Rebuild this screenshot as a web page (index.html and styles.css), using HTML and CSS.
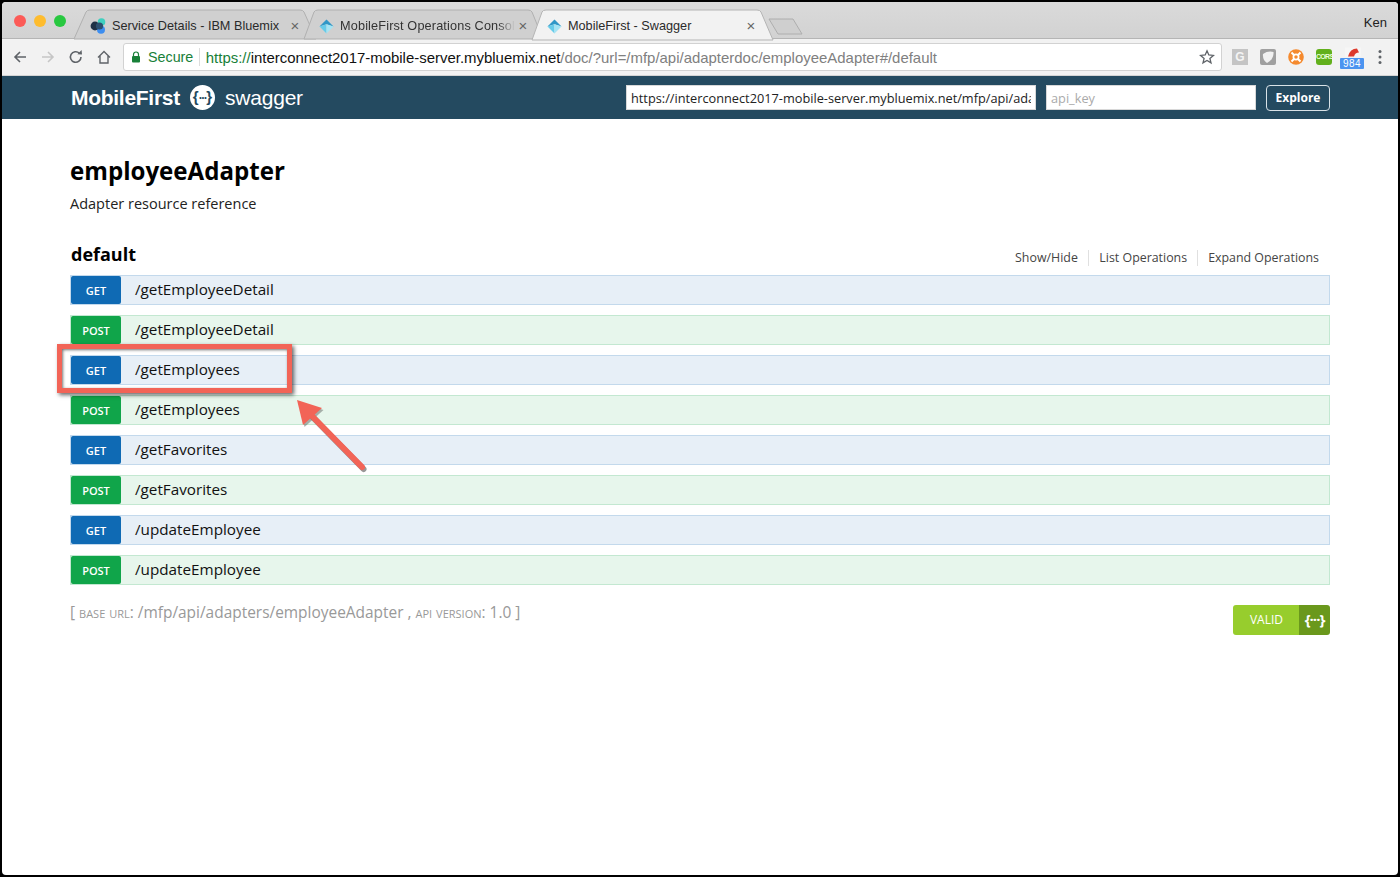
FILE: index.html
```html
<!DOCTYPE html>
<html lang="en">
<head>
<meta charset="utf-8">
<title>MobileFirst - Swagger</title>
<link rel="stylesheet" href="styles.css">
</head>
<body>
<div class="window">
  <div class="tabstrip">
    <div class="lights"><i class="light red"></i><i class="light yellow"></i><i class="light green"></i></div>
    <svg class="tabshapes" width="820" height="41" viewBox="0 0 820 41" aria-hidden="true">
      <path d="M74 39 L86 12 Q87 10 90 10 L300 10 Q303 10 304 12 L316 39 Z" fill="#d0d0d0" stroke="#b0b0b0"/>
      <path d="M304 39 L314 12 Q315 10 318 10 L528 10 Q531 10 532 12 L543 39 Z" fill="#d0d0d0" stroke="#b0b0b0"/>
      <path d="M532 40 L542 12 Q543 10 546 10 L757 10 Q760 10 761 12 L773 40 Z" fill="#f2f2f2" stroke="#b4b4b4"/>
      <path d="M769 19 L793 19 L802 34 L778 34 Z" fill="#cfcfcf" stroke="#aeaeae" stroke-linejoin="round"/>
    </svg>
    <div class="tab tab-one">
      <svg class="favicon" viewBox="0 0 16 16"><circle cx="11.5" cy="4" r="3.8" fill="#3fd0bf"/><circle cx="11" cy="11.8" r="4" fill="#3d8ef0"/><circle cx="5" cy="8" r="4.4" fill="#1f3246"/><circle cx="9.5" cy="8" r="3.6" fill="#2c4f6e"/></svg>
      <span class="tabtitle">Service Details - IBM Bluemix</span><span class="tabx">×</span>
    </div>
    <div class="tab tab-two">
      <svg class="favicon" viewBox="0 0 16 16"><path d="M8 .5 L15.5 8 L8 5.5 L.5 8 Z" fill="#2f97c7"/><path d="M.5 8 L8 5.5 L8 15.5 Z" fill="#66cbe9"/><path d="M15.5 8 L8 5.5 L8 15.5 Z" fill="#a4e4f4"/></svg>
      <span class="tabtitle fade">MobileFirst Operations Consol</span><span class="tabx">×</span>
    </div>
    <div class="tab tab-three">
      <svg class="favicon" viewBox="0 0 16 16"><path d="M8 .5 L15.5 8 L8 5.5 L.5 8 Z" fill="#2f97c7"/><path d="M.5 8 L8 5.5 L8 15.5 Z" fill="#66cbe9"/><path d="M15.5 8 L8 5.5 L8 15.5 Z" fill="#a4e4f4"/></svg>
      <span class="tabtitle wide">MobileFirst - Swagger</span><span class="tabx">×</span>
    </div>
    <span class="profile">Ken</span>
  </div>

  <div class="toolbar">
    <svg class="navicon" viewBox="0 0 16 16"><path d="M14 8 H3 M8 3 L3 8 L8 13" fill="none" stroke="#5f6368" stroke-width="1.6"/></svg>
    <svg class="navicon" viewBox="0 0 16 16"><path d="M2 8 H13 M8 3 L13 8 L8 13" fill="none" stroke="#c6c6c6" stroke-width="1.6"/></svg>
    <svg class="navicon" viewBox="0 0 16 16"><path d="M13 8 A5.3 5.3 0 1 1 11.4 4.2" fill="none" stroke="#5f6368" stroke-width="1.6"/><path d="M9.4 5.2 L14 5.6 L13.6 1 Z" fill="#5f6368"/></svg>
    <svg class="navicon" viewBox="0 0 16 16"><path d="M2 8.5 L8 2.5 L14 8.5 M4 7 V14 H12 V7" fill="none" stroke="#5f6368" stroke-width="1.4"/></svg>
    <div class="omnibox">
      <svg class="lock" viewBox="0 0 10 12"><path d="M2.5 5 V3.5 A2.5 2.5 0 0 1 7.5 3.5 V5" fill="none" stroke="#188038" stroke-width="1.2"/><rect x="1" y="5" width="8" height="6.5" rx="1" fill="#188038"/></svg>
      <span class="secure">Secure</span>
      <span class="omnisep"></span>
      <span class="url"><span class="scheme">https://</span><span class="host">interconnect2017-mobile-server.mybluemix.net</span><span class="path">/doc/?url=/mfp/api/adapterdoc/employeeAdapter#/default</span></span>
      <svg class="star" viewBox="0 0 16 16"><path d="M8 1.8 L9.8 6 L14.4 6.4 L10.9 9.4 L12 13.9 L8 11.5 L4 13.9 L5.1 9.4 L1.6 6.4 L6.2 6 Z" fill="none" stroke="#5f6368" stroke-width="1.3"/></svg>
    </div>
    <div class="extensions">
      <span class="ext ext-g">G</span>
      <svg class="ext" viewBox="0 0 16 16"><rect width="16" height="16" rx="2" fill="#a0a0a0"/><path d="M3 5 Q8 1.5 13.5 3 Q14 10 7 14 Q2.5 11 3 5 Z" fill="#f1f1f1"/></svg>
      <svg class="ext" viewBox="0 0 16 16"><circle cx="8" cy="8" r="7.8" fill="#f58a2e"/><circle cx="8" cy="8" r="2.6" fill="none" stroke="#fff" stroke-width="1.7"/><path d="M3.5 3.5 L6 6 M12.5 3.5 L10 6 M3.5 12.5 L6 10 M12.5 12.5 L10 10" stroke="#fff" stroke-width="2"/></svg>
      <span class="ext ext-cors">CORS</span>
      <span class="ext-badge">
        <svg class="gauge" viewBox="0 0 16 9"><rect width="16" height="9" fill="#f6f6f6"/><path d="M3 9 Q5 1 12 1 L14 5 Q10 5 9 9 Z" fill="#dd3a2c"/></svg>
        <span class="badge-num">984</span>
      </span>
    </div>
    <svg class="menu-dots" viewBox="0 0 4 16"><circle cx="2" cy="2.5" r="1.5"/><circle cx="2" cy="8" r="1.5"/><circle cx="2" cy="13.5" r="1.5"/></svg>
  </div>

  <header class="swagger-header">
    <div class="brand">
      <span class="brand-name">MobileFirst</span>
      <span class="brand-logo">{<b>···</b>}</span>
      <span class="brand-swagger">swagger</span>
    </div>
    <form class="explore-form">
      <input class="field field-url" type="text" value="https://interconnect2017-mobile-server.mybluemix.net/mfp/api/adapterdoc/employeeAdapter">
      <input class="field field-key" type="text" placeholder="api_key">
      <span class="explore">Explore</span>
    </form>
  </header>

  <main class="content">
    <h1 class="title">employeeAdapter</h1>
    <p class="subtitle">Adapter resource reference</p>
    <div class="section-head">
      <h2 class="section-name">default</h2>
      <ul class="section-links">
        <li>Show/Hide</li><li>List Operations</li><li>Expand Operations</li>
      </ul>
    </div>
    <div class="ops">
      <div class="op get"><span class="verb">GET</span><span class="oppath">/getEmployeeDetail</span></div>
      <div class="op post"><span class="verb">POST</span><span class="oppath">/getEmployeeDetail</span></div>
      <div class="op get"><span class="verb">GET</span><span class="oppath">/getEmployees</span></div>
      <div class="op post"><span class="verb">POST</span><span class="oppath">/getEmployees</span></div>
      <div class="op get"><span class="verb">GET</span><span class="oppath">/getFavorites</span></div>
      <div class="op post"><span class="verb">POST</span><span class="oppath">/getFavorites</span></div>
      <div class="op get"><span class="verb">GET</span><span class="oppath">/updateEmployee</span></div>
      <div class="op post"><span class="verb">POST</span><span class="oppath">/updateEmployee</span></div>
      <div class="highlight"></div>
      <svg class="arrow" width="80" height="82" viewBox="0 0 80 82" aria-hidden="true">
        <path d="M68 72 L18 21" stroke="#444" stroke-opacity=".55" stroke-width="6" stroke-linecap="round" transform="translate(1.5 2)"/>
        <path d="M3 5 L28 13 L9 30 Z" fill="#444" fill-opacity=".4" transform="translate(1.5 2)"/>
        <path d="M68 72 L18 21" stroke="#f26457" stroke-width="6" stroke-linecap="round"/>
        <path d="M3 5 L28 13 L9 30 Z" fill="#f26457"/>
      </svg>
    </div>
    <div class="foot">
      <div class="baseinfo">[ <span class="sc">base url</span>: /mfp/api/adapters/employeeAdapter , <span class="sc">api version</span>: 1.0 ]</div>
      <div class="valid"><span class="valid-text">VALID</span><span class="valid-icon">{···}</span></div>
    </div>
  </main>
</div>
</body>
</html>
```
FILE: styles.css
```css
* { box-sizing: border-box; }
html, body { margin: 0; padding: 0; background: #000; }
.window {
  position: relative;
  width: 1400px;
  height: 877px;
  border: 2px solid #000;
  border-radius: 6px;
  background: #fff;
  overflow: hidden;
  font-family: "Open Sans", sans-serif;
}
.tabstrip {
  position: relative;
  height: 37px;
  background: linear-gradient(#dadada, #d2d2d2);
  border-bottom: 1px solid #b5b5b5;
  font-family: "Liberation Sans", sans-serif;
}
.lights { position: absolute; left: 12px; top: 13px; display: flex; gap: 8px; }
.light { width: 12px; height: 12px; border-radius: 50%; display: block; }
.red { background: #fc5b57; }
.yellow { background: #febc2e; }
.green { background: #28c840; }
.tabshapes { position: absolute; left: -2px; top: -2px; }
.tab { position: absolute; top: 14px; height: 20px; display: flex; align-items: center; font-size: 12.7px; color: #2a2a2a; }
.tab-one { left: 88px; width: 210px; }
.tab-two { left: 317px; width: 209px; }
.tab-three { left: 545px; width: 209px; }
.favicon { width: 16px; height: 16px; flex: none; margin-right: 6px; }
.tab-two .favicon, .tab-three .favicon { width: 15px; height: 15px; }
.tabtitle { flex: 1; white-space: nowrap; overflow: hidden; }
.fade { color: #333; letter-spacing: .15px; -webkit-mask-image: linear-gradient(90deg, #000 90%, transparent 100%); mask-image: linear-gradient(90deg, #000 90%, transparent 100%); }
.tabx { width: 10px; margin-left: 3px; color: #666; font-size: 15px; text-align: center; line-height: 14px; }
.profile { position: absolute; right: 11px; top: 13px; font-size: 13px; color: #222; }

.toolbar {
  height: 37px;
  background: #f2f2f2;
  border-bottom: 1px solid #d4d4d4;
  display: flex;
  align-items: center;
  padding: 0 10px;
  font-family: "Liberation Sans", sans-serif;
}
.navicon { width: 16px; height: 16px; margin-right: 12px; flex: none; }
.omnibox {
  width: 1099px;
  height: 28px;
  margin-left: -1px;
  background: #fff;
  border: 1px solid #d2d2d2;
  border-radius: 3px;
  display: flex;
  align-items: center;
  padding: 0 6px 0 7px;
  font-size: 14.95px;
  white-space: nowrap;
}
.lock { width: 10px; height: 12px; flex: none; margin-right: 7px; }
.secure { color: #188038; font-size: 14.3px; }
.omnisep { width: 1px; height: 18px; background: #ddd; margin: 0 5.5px 0 6px; }
.url { flex: 1; overflow: hidden; }
.scheme { color: #188038; }
.host { color: #111; }
.path { color: #808080; }
.star { width: 16px; height: 16px; flex: none; }
.extensions { display: flex; align-items: center; gap: 12px; margin-left: 10px; }
.ext { width: 16px; height: 16px; display: block; flex: none; }
.ext-g { background: #c4c4c4; color: #f4f4f4; font-size: 12px; font-weight: 700; text-align: center; line-height: 16px; }
.ext-cors { background: #62b01c; color: #e8ffd8; font-size: 7px; font-weight: 700; line-height: 16px; text-align: center; border-radius: 3px; letter-spacing: -.7px; white-space: nowrap; overflow: hidden; }
.ext-badge { position: relative; width: 24px; height: 24px; display: block; margin-left: -4px; }
.gauge { position: absolute; left: 5px; top: 2px; width: 16px; height: 10px; }
.badge-num { position: absolute; left: 0; bottom: 0; width: 24px; height: 11px; background: #4c94f0; color: #fff; font-size: 10px; line-height: 11px; text-align: center; border-radius: 1px; letter-spacing: .5px; }
.menu-dots { width: 4px; height: 16px; fill: #5f6368; margin-left: 14px; flex: none; }

.swagger-header {
  height: 43px;
  background: #244a60;
  display: flex;
  align-items: center;
  justify-content: space-between;
  padding: 0 68px;
}
.brand { display: flex; align-items: center; color: #fff; }
.brand-name { font-family: "Liberation Sans", sans-serif; font-weight: 700; font-size: 21px; letter-spacing: -.28px; margin-left: 1px; }
.brand-logo { width: 25px; height: 25px; border-radius: 50%; background: #fff; color: #244a60; margin-left: 10px; font: 700 15px/23px "Liberation Sans", sans-serif; text-align: center; white-space: nowrap; }
.brand-logo b { font-size: 12px; letter-spacing: -1.5px; }
.brand-swagger { font-family: "Liberation Sans", sans-serif; font-size: 21px; margin-left: 10px; letter-spacing: -.2px; }
.explore-form { display: flex; align-items: center; }
.field { height: 25px; border: 1px solid #d8d8d8; background: #fff; padding: 0 4px; font: 12.75px "Open Sans", sans-serif; color: #222; outline: 0; margin: 0; }
.field::placeholder { color: #aaa; opacity: 1; }
.field-url { width: 410px; }
.field-key { width: 210px; margin-left: 10px; }
.explore { width: 64px; height: 26px; margin-left: 10px; border: 1px solid #d9e2e7; border-radius: 4px; color: #fff; font-size: 12px; font-weight: 700; line-height: 24px; text-align: center; }

.content { padding: 0 68px; color: #000; }
.title { margin: 0; padding-top: 34px; font-size: 24.1px; line-height: 36px; font-weight: 700; }
.subtitle { margin: 3px 0 0; font-size: 14.5px; line-height: 24px; color: #222; }
.section-head { display: flex; justify-content: space-between; align-items: flex-end; height: 40px; margin-top: 19px; }
.section-name { margin: 0 0 0 1px; font-size: 18px; line-height: 28px; font-weight: 700; padding-bottom: 7px; }
.section-links { list-style: none; margin: 0; padding: 0 1px 9px 0; display: flex; font-size: 12.4px; line-height: 16px; color: #444; }
.section-links li { padding: 0 10px; border-left: 1px solid #e0e0e0; }
.section-links li:first-child { border-left: 0; padding-right: 10.5px; }

.ops { position: relative; display: flex; flex-direction: column; gap: 10px; }
.op { height: 30px; border: 1px solid; display: flex; align-items: center; }
.get { background: #e7eff7; border-color: #c3d9ec; }
.post { background: #e7f6ec; border-color: #c3e8d1; }
.verb { width: 50px; height: 28px; border-radius: 2px; color: #fff; font-size: 11px; font-weight: 600; line-height: 29px; text-align: center; flex: none; }
.get .verb { background: #0f6ab4; }
.post .verb { background: #10a54a; }
.oppath { margin: 0 0 2px 14px; font-size: 15.25px; color: #111; }

.highlight {
  position: absolute;
  left: -13px;
  top: 69px;
  width: 235px;
  height: 49px;
  border: 5px solid #f26457;
  box-shadow: 2px 2px 4px rgba(0,0,0,.6), inset 1px 1px 3px rgba(0,0,0,.55);
}
.arrow { position: absolute; left: 224px; top: 120px; }

.foot { display: flex; justify-content: space-between; align-items: flex-start; margin-top: 20px; }
.baseinfo { font-size: 15.45px; line-height: 14px; color: #999; }
.sc { font-variant: small-caps; font-size: 15px; }
.valid { width: 97px; height: 30px; display: flex; border-radius: 3px; overflow: hidden; color: #fff; }
.valid-text { width: 66px; background: #97cd2d; font-size: 12px; line-height: 30px; text-align: center; padding-left: 1px; }
.valid-icon { flex: 1; background: #6a981c; font-size: 15px; font-weight: 700; line-height: 28px; text-align: center; letter-spacing: -1px; }
```
